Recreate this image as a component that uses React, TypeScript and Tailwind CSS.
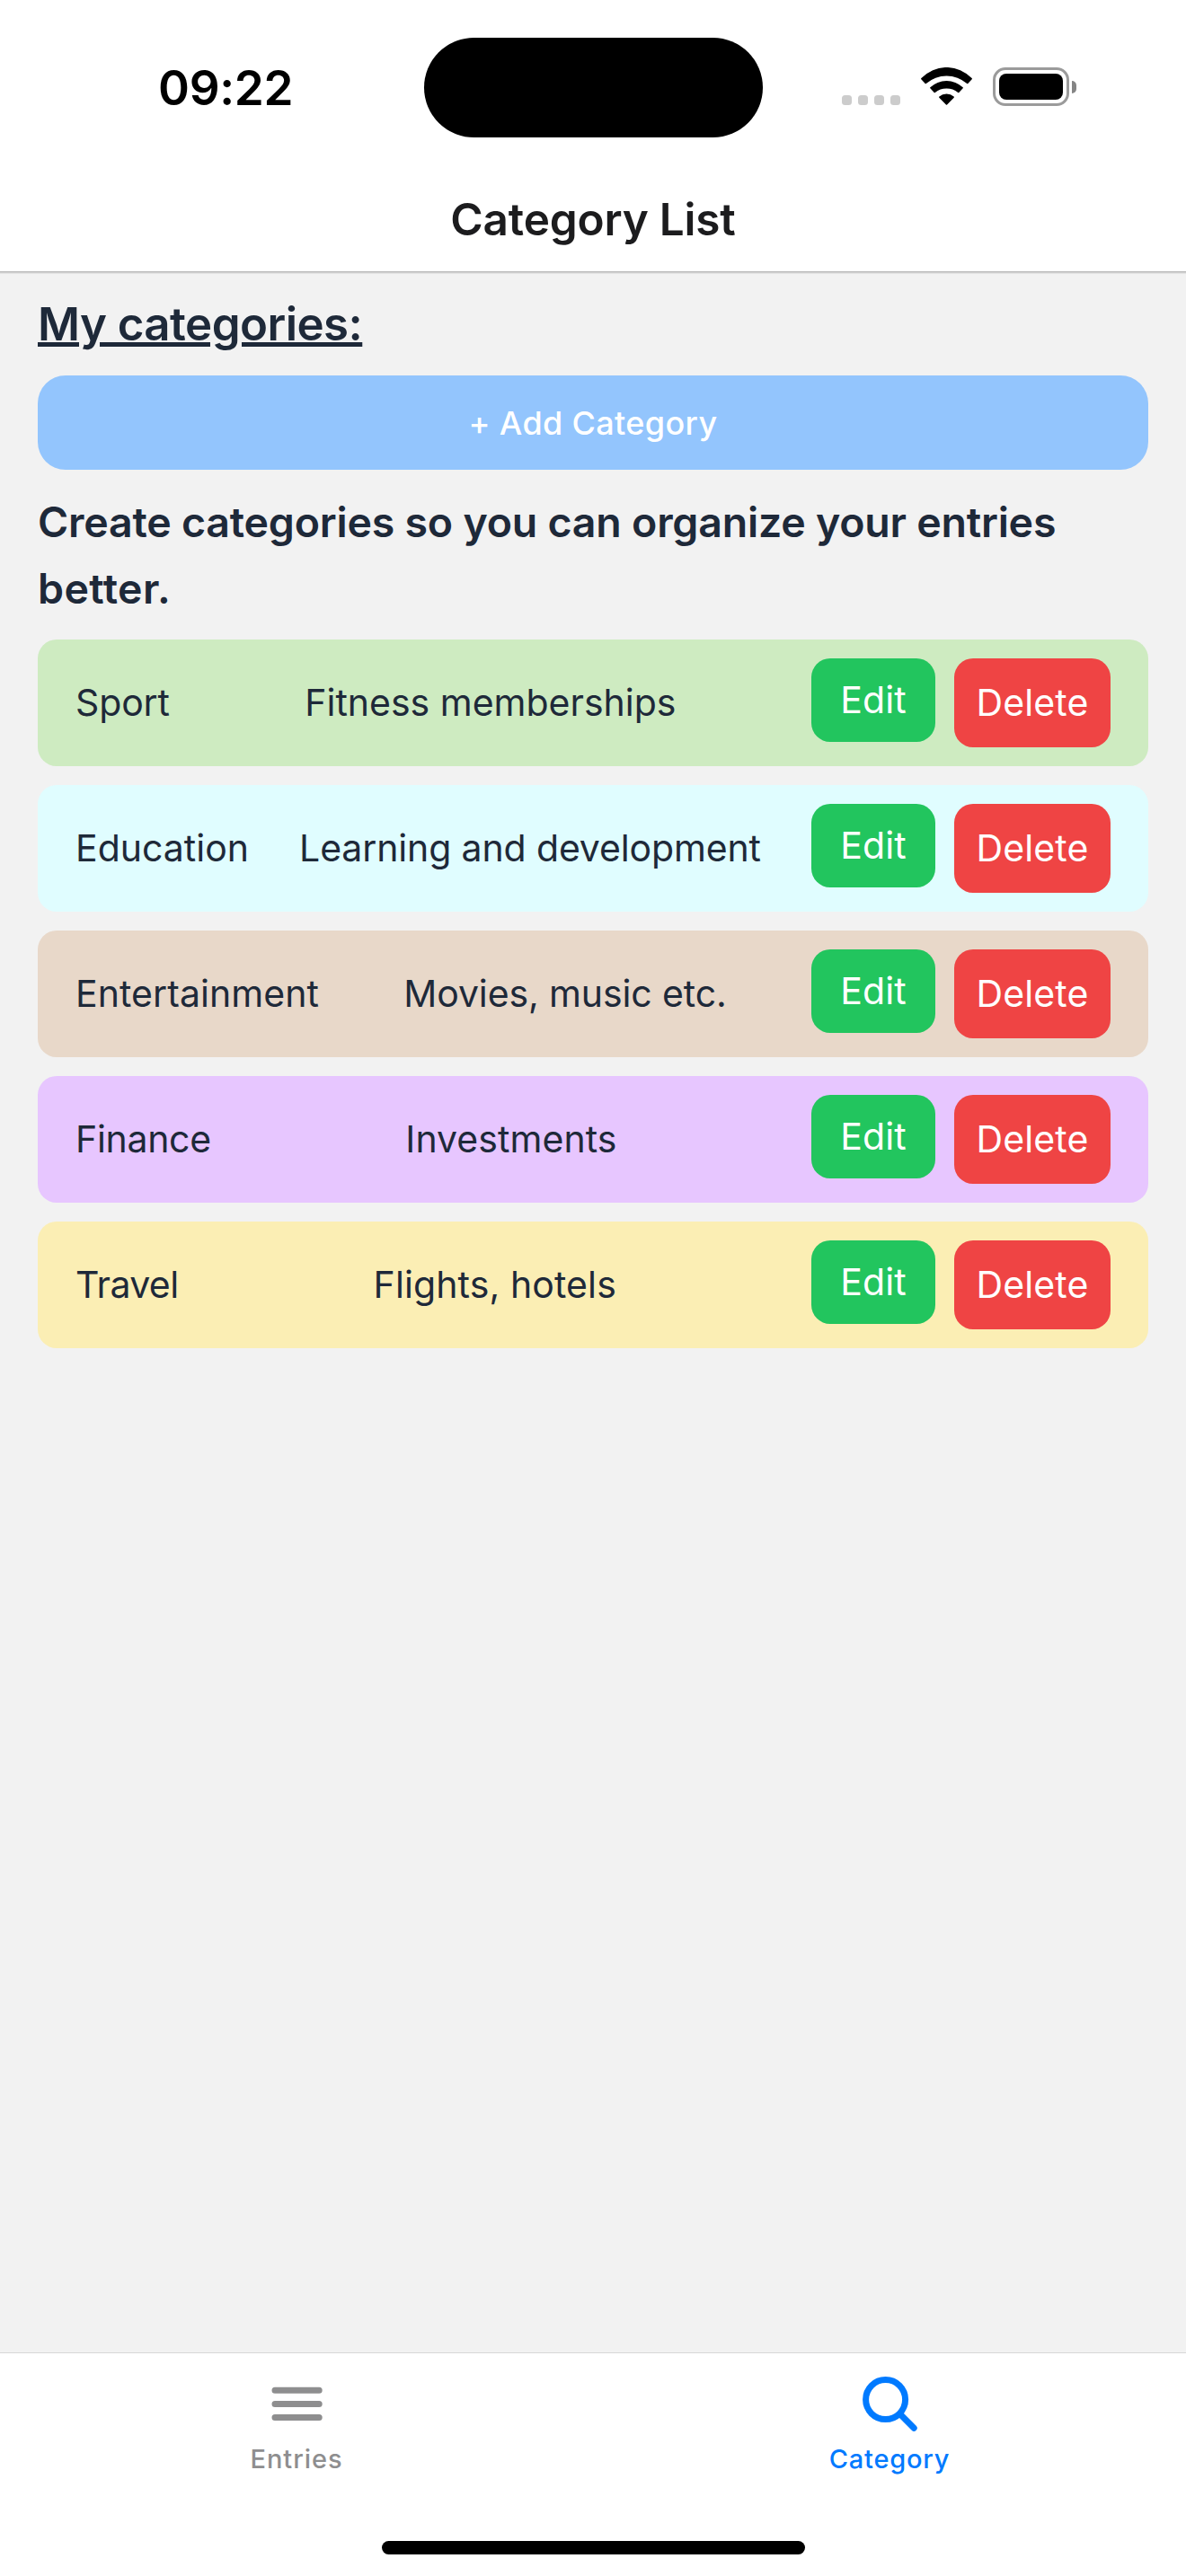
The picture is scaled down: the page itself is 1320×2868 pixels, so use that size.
type Category = {
  name: string;
  note: string;
  color: string;
  nameClass: string;
  noteClass: string;
};

const categories: Category[] = [
  { name: "Sport", note: "Fitness memberships", color: "bg-[#ceebc1]", nameClass: "tracking-[-0.14px]", noteClass: "tracking-normal" },
  { name: "Education", note: "Learning and development", color: "bg-[#e0fdff]", nameClass: "tracking-normal", noteClass: "tracking-[-0.13px]" },
  { name: "Entertainment", note: "Movies, music etc.", color: "bg-[#e8d8c9]", nameClass: "tracking-[0.07px]", noteClass: "tracking-[-0.12px]" },
  { name: "Finance", note: "Investments", color: "bg-[#e7c6ff]", nameClass: "tracking-[-0.3px]", noteClass: "tracking-[0.06px]" },
  { name: "Travel", note: "Flights, hotels", color: "bg-[#fbeeb4]", nameClass: "tracking-[-0.6px]", noteClass: "tracking-[0.1px]" },
];

function WifiIcon() {
  return (
    <svg className="mb-px ml-[23px] h-[42px] w-[57px] shrink-0" viewBox="0 0 57 42" fill="#000">
      <path d="M.3 13.2Q-.2 12.7.4 12.1A38.6 38.6 0 0 1 56.6 12.1Q57.2 12.7 56.7 13.2L52.3 17.9Q51.8 18.4 51.2 17.9A34.7 34.7 0 0 0 5.8 17.9Q5.2 18.4 4.7 17.9Z" />
      <path d="M10.3 23.3Q9.8 22.8 10.3 22.3A26.3 26.3 0 0 1 46.7 22.3Q47.2 22.8 46.7 23.3L42.3 28.1Q41.8 28.6 41.2 28.1A20.2 20.2 0 0 0 15.8 28.1Q15.2 28.6 14.7 28.1Z" />
      <path d="M20.3 33.7Q19.7 33 20.4 32.5A12.4 12.4 0 0 1 36.6 32.5Q37.3 33 36.7 33.7L29.1 41.5Q28.5 42.1 27.9 41.5Z" />
    </svg>
  );
}

function Battery() {
  return (
    <div className="ml-[23px] flex shrink-0 items-center">
      <div className="h-[43px] w-[85px] rounded-[14px] border-[3px] border-[#9b9b9b] p-1">
        <div className="h-[29px] w-[71px] rounded-[8px] bg-black" />
      </div>
      <div className="ml-[3px] h-[14px] w-[5px] rounded-r-full bg-[#858585]" />
    </div>
  );
}

function StatusBar() {
  return (
    <div className="flex h-[194px] items-center">
      <div className="w-[472px] shrink-0 pt-px pl-[176px] text-[53px] leading-[60px] font-semibold tracking-[-0.32px] text-black">
        09:22
      </div>
      <div className="h-[111px] w-[377px] shrink-0 rounded-full bg-black" />
      <div className="-mt-px ml-[88px] flex items-end">
        <div className="mb-px flex gap-[7px]">
          {[0, 1, 2, 3].map((dot) => (
            <div key={dot} className="size-[11px] rounded-[3.5px] bg-[#cccccc]" />
          ))}
        </div>
        <WifiIcon />
        <Battery />
      </div>
    </div>
  );
}

function CategoryRow({ name, note, color, nameClass, noteClass }: Category) {
  return (
    <li className={`flex h-[141px] items-center justify-between rounded-[21px] px-[42px] text-[41px] leading-[56px] text-gray-800 ${color}`}>
      <span className={`pb-0.5 ${nameClass}`}>{name}</span>
      <span className={`pb-0.5 ${noteClass}`}>{note}</span>
      <div className="flex h-[99px] items-start gap-[21px] text-white">
        <button className="h-[93px] w-[138px] rounded-[21px] bg-[#22c55e] pb-px tracking-[0.1px]">Edit</button>
        <button className="h-[99px] w-[174px] rounded-[21px] bg-[#ef4444] pb-px tracking-[0.1px]">Delete</button>
      </div>
    </li>
  );
}

export default function App() {
  return (
    <div className="flex h-[2868px] w-[1320px] flex-col bg-[#f2f2f2] font-['Inter','Liberation_Sans',sans-serif]">
      <header className="h-[303px] border-b border-[#b9b9b9] bg-white shadow-[0_1px_0_#d0d0d0,0_2px_0_#e4e4e4]">
        <StatusBar />
        <h1 className="text-center text-[49.5px] leading-[100px] font-semibold tracking-[-0.2px] text-[#1c1c1e]">
          Category List
        </h1>
      </header>

      <main className="flex-1 px-[42px] pt-4 text-gray-800">
        <h2 className="text-[51px] leading-[84px] font-semibold tracking-[-0.55px] underline decoration-[5px] underline-offset-[2px]">
          My categories:
        </h2>
        <button className="mt-[15px] flex h-[105px] w-full items-center justify-center rounded-[31px] bg-[#93c5fd] text-[36px] font-medium tracking-[0.35px] text-white">
          + Add Category
        </button>
        <p className="mt-[21px] text-[46.5px] leading-[74px] font-semibold tracking-[-0.22px]">
          Create categories so you can organize your entries{" "}
          <span className="tracking-[0.42px]">better.</span>
        </p>
        <ul className="mt-5 flex flex-col gap-[21px]">
          {categories.map((category) => (
            <CategoryRow key={category.name} {...category} />
          ))}
        </ul>
      </main>

      <footer className="flex h-[249px] flex-col border-t border-[#d8d8d8] bg-white">
        <nav className="grid grid-cols-2 pt-5 text-[29px] font-medium">
          <a className="flex flex-col items-center tracking-[0.95px] text-[#8e8e8f]">
            <svg className="size-[72px]" viewBox="0 0 72 72" fill="none" stroke="currentColor" strokeWidth="7" strokeLinecap="round">
              <path d="M12 21.2H61.2M12 36.5H61.2M12 51.6H61.2" />
            </svg>
            <span className="mt-1.5 leading-[40px]">Entries</span>
          </a>
          <a className="flex flex-col items-center tracking-[0.8px] text-[#007aff]">
            <svg className="size-[72px]" viewBox="0 0 72 72" fill="none" stroke="currentColor" strokeWidth="7" strokeLinecap="round">
              <circle cx="31.6" cy="31.6" r="22" />
              <path d="M47.5 47.5L63.2 63.2" />
            </svg>
            <span className="mt-1.5 leading-[40px]">Category</span>
          </a>
        </nav>
        <div className="mt-auto mb-6 ml-px h-[15px] w-[471px] self-center rounded-full bg-black" />
      </footer>
    </div>
  );
}
